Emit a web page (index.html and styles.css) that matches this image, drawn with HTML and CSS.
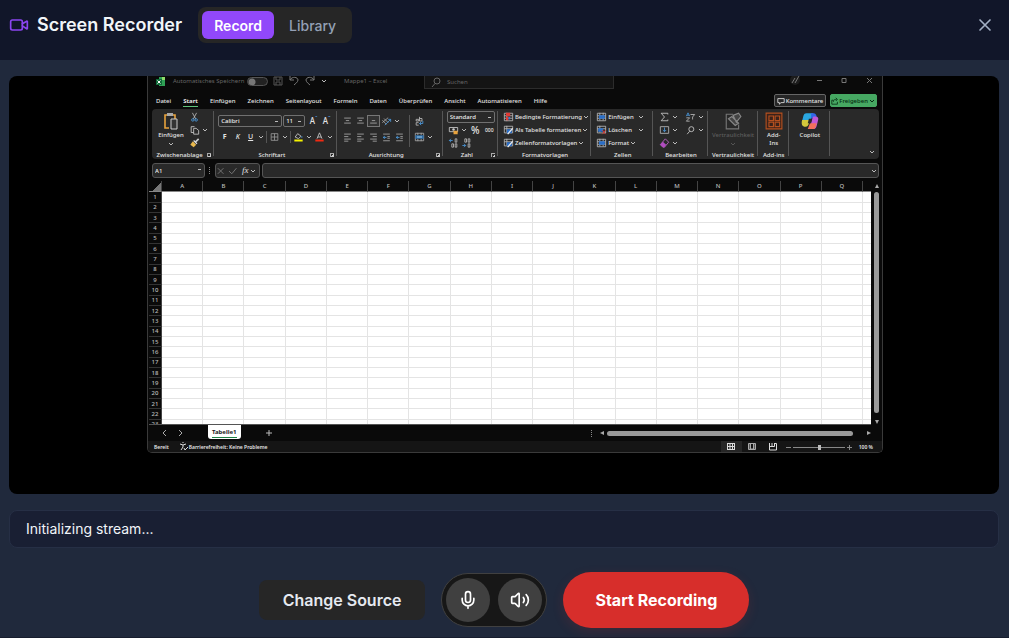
FILE: index.html
```html
<!DOCTYPE html>
<html lang="en">
<head>
<meta charset="utf-8">
<title>Screen Recorder</title>
<link rel="stylesheet" href="styles.css">
</head>
<body>
<svg class="sprite" aria-hidden="true">
  <symbol id="caret" viewBox="0 0 8 8"><path d="M2 3l2 2 2-2" fill="none" stroke="#bbb"/></symbol>
  <symbol id="excel" viewBox="0 0 9 9"><path d="M3 0h6v9H3z" fill="#2fa155"/><path d="M6 0h3v3H6z" fill="#8fdc6a"/><path d="M0 2h6v6H0z" fill="#0f6b38"/><path d="M1.5 3.5l3 3m0-3l-3 3" stroke="#fff"/></symbol>
  <symbol id="save" viewBox="0 0 12 12"><path d="M2 2h8v8H2zM4 2v3h4V2M4 10V7h4v3" fill="none" stroke="#555"/></symbol>
  <symbol id="undo" viewBox="0 0 12 12"><path d="M2 1v4h4M2 5c2-4 8-3 8 0 0 2-3 4-4 5" fill="none" stroke="#777"/></symbol>
  <symbol id="redo" viewBox="0 0 12 12"><path d="M10 1v4H6M10 5C8 1 2 2 2 5c0 2 3 4 4 5" fill="none" stroke="#777"/></symbol>
  <symbol id="find" viewBox="0 0 12 12"><circle cx="7" cy="5" r="3" fill="none" stroke="currentColor"/><path d="M5 7.5L2 11" stroke="currentColor"/></symbol>
  <symbol id="paste" viewBox="0 0 16 18"><path d="M6 16H2V3h10v4" fill="none" stroke="#e8a33d" stroke-width="1.6"/><path d="M4 1h6v3H4z" fill="#aaa"/><path d="M8 7h6v10H8z" fill="#333" stroke="#ccc"/></symbol>
  <symbol id="cut" viewBox="0 0 12 12"><path d="M3.500 1l4 7.500M8.500 1l-4 7.500" stroke="#bbb"/><circle cx="4" cy="9.500" r="1.500" fill="none" stroke="#4c9be0"/><circle cx="8" cy="9.500" r="1.500" fill="none" stroke="#4c9be0"/></symbol>
  <symbol id="copy" viewBox="0 0 12 12"><path d="M5 9H2V2h4M5 4h3l3 2.500V11H5z" fill="none" stroke="#ccc"/></symbol>
  <symbol id="brush" viewBox="0 0 12 12"><path d="M11 1L7 5" stroke="#ccc" stroke-width="2"/><path d="M4 4l4 4-3 3-4-3z" fill="#e8b84d"/><path d="M5 3l4 4" stroke="#ddd" stroke-width="1.500"/></symbol>
  <symbol id="borders" viewBox="0 0 12 12"><path d="M2 2h8v8H2zM6 2v8M2 6h8" fill="none" stroke="#999"/></symbol>
  <symbol id="fill" viewBox="0 0 12 12"><path d="M5 2l4 3-3 3-4-2z" fill="none" stroke="#ccc"/><path d="M10 5v2" stroke="#4c9be0"/><path d="M1 9h10v2.500H1z" fill="#f6f300"/></symbol>
  <symbol id="color" viewBox="0 0 12 12"><path d="M3 8l3-7 3 7M4 6h4" fill="none" stroke="#ccc"/><path d="M1 9h10v2.500H1z" fill="#f02a12"/></symbol>
  <symbol id="top" viewBox="0 0 12 12"><path d="M2 2.500h8M4 5.500h4M2 8.500h8" stroke="#aaa"/></symbol>
  <symbol id="bottom" viewBox="0 0 12 12"><path d="M4 5.500h4M2 8.500h8" stroke="#aaa"/></symbol>
  <symbol id="left" viewBox="0 0 12 12"><path d="M2 2.500h8M2 5.500h5M2 8.500h8M2 11h5" stroke="#aaa"/></symbol>
  <symbol id="right" viewBox="0 0 12 12"><path d="M2 2.500h8M5 5.500h5M2 8.500h8M5 11h5" stroke="#aaa"/></symbol>
  <symbol id="indent" viewBox="0 0 12 12"><path d="M2 2.500h8M7 5.500h3M7 7.500h3M2 10.500h8" stroke="#aaa"/><path d="M6 6.500H2M4 5L2 6.500 4 8" fill="none" stroke="#4c9be0"/></symbol>
  <symbol id="orient" viewBox="0 0 12 12"><path d="M1 5l5 5M3 3l5 5M1 8l7-6" stroke="#aaa"/><path d="M4 11l7-7M8 4h3v3" fill="none" stroke="#4c9be0"/></symbol>
  <symbol id="wrap" viewBox="0 0 12 12"><path d="M2 4h3v2H2zM6 1v5h3V3H6M5 8H2v3h3" fill="none" stroke="#bbb"/><path d="M10 6v3H6m2-2L6 9l2 2" fill="none" stroke="#4c9be0"/></symbol>
  <symbol id="merge" viewBox="0 0 12 12"><path d="M1 1.500h10v9H1zM4 1v3M8 1v3M4 8v3M8 8v3" fill="none" stroke="#aaa"/><path d="M1 4h10v4H1z" fill="#2b6ca8"/><path d="M3 6h6" stroke="#bde"/></symbol>
  <symbol id="money" viewBox="0 0 12 12"><path d="M1 3h10v5H1z" fill="none" stroke="#ccc"/><circle cx="6" cy="5.500" r="1.500" fill="#ccc"/><path d="M6 7h5v4H6z" fill="#e8a33d"/></symbol>
  <symbol id="decimal" viewBox="0 0 12 12"><path d="M5 3H1m2-2L1 3l2 2" fill="none" stroke="#4c9be0"/><path d="M8 1h2v4H8zM4 7h2v4H4zM8 7h2v4H8z" fill="none" stroke="#bbb"/></symbol>
  <symbol id="decimalLess" viewBox="0 0 12 12"><path d="M1 9h4M3 7l2 2-2 2" fill="none" stroke="#4c9be0"/><path d="M4 1h2v4H4zM8 1h2v4H8zM8 7h2v4H8z" fill="none" stroke="#bbb"/></symbol>
  <symbol id="cond" viewBox="0 0 12 12"><path d="M1 1.500h10v9H1zM1 4.500h10M1 7.500h10M4 1v10" fill="none" stroke="#bbb"/><path d="M3 1h5v4H3zM3 6h3v4H3z" fill="#e03b35"/><path d="M6 6h2v3H6z" fill="#3778c8"/></symbol>
  <symbol id="asTable" viewBox="0 0 12 12"><path d="M1 1.500h10v8H1zM1 4.500h10M4 1v8" fill="none" stroke="#bbb"/><path d="M4 5h6v5H4z" fill="#2b6fc8"/><path d="M11 4L5 11" stroke="#eee" stroke-width="1.500"/></symbol>
  <symbol id="cells" viewBox="0 0 12 12"><path d="M1 1.500h10v9H1zM1 4.500h10M1 7.500h10M4 1v9M8 1v9" fill="none" stroke="#bbb"/><path d="M3 4h7v4H3z" fill="#2b6fc8"/></symbol>
  <symbol id="cellsDel" viewBox="0 0 12 12"><path d="M1 1.500h10v8H1zM1 4.500h10M4 1v8" fill="none" stroke="#bbb"/><path d="M2 4h6v4H2z" fill="#2b6fc8"/><path d="M7 6l4 5m0-5l-4 5" stroke="#e03b35"/></symbol>
  <symbol id="sum" viewBox="0 0 12 12"><path d="M10 3V1.500H2L6 6l-4 4.500h8V9" fill="none" stroke="#ccc"/></symbol>
  <symbol id="sort" viewBox="0 0 12 12"><path d="M1 5l2-4 2 4M2 4h2" fill="none" stroke="#4c9be0"/><path d="M1 7h4l-4 4h4M6 3h5L8.500 6v3" fill="none" stroke="#bbb"/></symbol>
  <symbol id="down" viewBox="0 0 12 12"><path d="M1 2h10v8H1z" fill="none" stroke="#bbb"/><path d="M6 3v5M4 6l2 2 2-2" fill="none" stroke="#4c9be0"/></symbol>
  <symbol id="eraser" viewBox="0 0 12 12"><path d="M7 1l4 4-5 6H4L1 8z" fill="none" stroke="#c46bd0"/><path d="M4 4.500L8 8l-2 3H4L1 8z" fill="#b14cc0"/></symbol>
  <symbol id="privacy" viewBox="0 0 16 16"><path d="M8 2H2v13h11v-4" fill="none" stroke="#777"/><path d="M4 6l3-2 6 6-3 2zM8 3l5-2 2 3-4 5z" fill="#444" stroke="#888"/></symbol>
  <symbol id="addins" viewBox="0 0 16 16"><path d="M1 1h14v14H1zM3.500 3.500h4v4h-4zM9 3.500h4v4H9zM3.500 9h4v4h-4zM9 9h4v4H9z" fill="#3a221a" stroke="#b5501f"/></symbol>
  <symbol id="copilot" viewBox="0 0 16 16"><path d="M5 1h6L8 8H1l1-4c.5-2 1-3 3-3z" fill="#2aa6df"/><path d="M1 7h7l-1 3c-.5 2-1 3-3 3-3 0-4-2-3-6z" fill="#d3c63b"/><path d="M9 1h2c2 0 2.500 1 3 3.500L9 6z" fill="#3366e8"/><path d="M11 4h1c3 0 4 1 3 4l-1 4c-.5 2-1 3-3 3H7l3-9z" fill="#c159d6"/><path d="M8 10h6l-1 3c-.5 1.500-1 2-2 2H6z" fill="#f2705c"/><path d="M7 6h3L9 10H6z" fill="#292929"/></symbol>
  <symbol id="comment" viewBox="0 0 10 10"><path d="M1 2h8v5H5L3 9V7H1z" fill="none" stroke="#eee"/></symbol>
  <symbol id="share" viewBox="0 0 10 10"><path d="M3 4H1v5h7V6M3 6c0-3 2-3 4-3M6 1l2 2-2 2" fill="none" stroke="#062b12"/></symbol>
  <symbol id="normal" viewBox="0 0 8 8"><path d="M0 .5h8M0 3.500h8M0 6.500h8M.5 0v7M3 0v7M5.500 0v7M7.500 0v7" stroke="#ddd" fill="none"/></symbol>
  <symbol id="page" viewBox="0 0 8 8"><path d="M.5.5h7v6h-7zM2.500 1v5h3V1" stroke="#aaa" fill="#555"/></symbol>
  <symbol id="breaks" viewBox="0 0 8 8"><path d="M.5 0v7h7V.5h-2M.5 3.500h5V0M3 0v3" stroke="#ddd" fill="none"/></symbol>
  <symbol id="access" viewBox="0 0 9 9"><path d="M1 2l3 1 3-1M4 3v2L2 8M4 0v1" fill="none" stroke="#ddd"/><path d="M5 6l1 2 3-3" fill="none" stroke="#ddd"/></symbol>
</svg>

<div class="app">
  <header class="header">
    <svg class="logo" viewBox="0 0 24 24"><path d="m16 13 5.223 3.482a.5.5 0 0 0 .777-.416V7.870a.5.5 0 0 0-.752-.432L16 10.500"/><rect x="2" y="6" width="14" height="12" rx="2"/></svg>
    <h1 class="title">Screen Recorder</h1>
    <nav class="segments">
      <button class="segment active">Record</button>
      <button class="segment">Library</button>
    </nav>
    <button class="close" aria-label="Close"><svg viewBox="0 0 24 24"><path d="M18 6 6 18M6 6l12 12"/></svg></button>
  </header>

  <main class="main">
    <section class="preview">
      <div class="window">
        <div class="titlebar">
          <svg class="i9"><use href="#excel"/></svg>
          <span class="autosave">Automatisches Speichern</span>
          <span class="toggle"></span>
          <svg class="i12"><use href="#save"/></svg>
          <svg class="i12"><use href="#undo"/></svg>
          <svg class="i12"><use href="#redo"/></svg>
          <svg class="caret"><use href="#caret"/></svg>
          <span class="docname">Mappe1 – Excel</span>
          <span class="searchbox"><svg class="i12"><use href="#find"/></svg>Suchen</span>
          <svg class="winbuttons" viewBox="0 0 84 12"><circle cx="5" cy="5" r="5" fill="#1c1c1c"/><path d="M2 8l3-5m0 5l4-7" stroke="#777"/><path d="M27 5.500h5M52 3.500h4v4h-4zM77 3l5 5m0-5l-5 5" fill="none" stroke="#777"/></svg>
        </div>

        <div class="tabs">
          <button class="tab">Datei</button><button class="tab current">Start</button><button class="tab">Einfügen</button><button class="tab">Zeichnen</button><button class="tab">Seitenlayout</button><button class="tab">Formeln</button><button class="tab">Daten</button><button class="tab">Überprüfen</button><button class="tab">Ansicht</button><button class="tab">Automatisieren</button><button class="tab">Hilfe</button>
          <span class="tabactions">
            <button class="comments"><svg class="i8"><use href="#comment"/></svg>Kommentare</button>
            <button class="share"><svg class="i8"><use href="#share"/></svg>Freigeben<svg class="caret" viewBox="0 0 8 8"><path d="M2 3l2 2 2-2" fill="none" stroke="#062b12"/></svg></button>
          </span>
        </div>

        <div class="ribbon">
          <div class="group">
            <div class="tools split">
              <button class="big"><svg class="i18"><use href="#paste"/></svg>Einfügen<svg class="caret"><use href="#caret"/></svg></button>
              <div class="rows">
                <div class="row"><svg class="tool"><use href="#cut"/></svg></div>
                <div class="row"><svg class="tool"><use href="#copy"/></svg><svg class="caret"><use href="#caret"/></svg></div>
                <div class="row"><svg class="tool"><use href="#brush"/></svg></div>
              </div>
            </div>
            <div class="label">Zwischenablage<span class="corner"></span></div>
          </div>
          <div class="group">
            <div class="tools rows two">
              <div class="row"><select class="font" aria-label="Schriftart"><option>Calibri</option></select><select class="size" aria-label="Schriftgrad"><option>11</option></select><span class="glyph big-a">A<sup>ˆ</sup></span><span class="glyph big-a">A<sup>ˇ</sup></span></div>
              <div class="row"><b class="glyph">F</b><i class="glyph">K</i><u class="glyph">U</u><svg class="caret"><use href="#caret"/></svg><span class="bar"></span><svg class="tool"><use href="#borders"/></svg><svg class="caret"><use href="#caret"/></svg><span class="bar"></span><svg class="tool"><use href="#fill"/></svg><svg class="caret"><use href="#caret"/></svg><svg class="tool"><use href="#color"/></svg><svg class="caret"><use href="#caret"/></svg></div>
            </div>
            <div class="label">Schriftart<span class="corner"></span></div>
          </div>
          <div class="group">
            <div class="tools split">
              <div class="rows two align">
                <div class="row"><svg class="tool"><use href="#top"/></svg><svg class="tool"><use href="#top"/></svg><svg class="tool boxed"><use href="#bottom"/></svg><svg class="tool"><use href="#orient"/></svg><svg class="caret"><use href="#caret"/></svg></div>
                <div class="row"><svg class="tool"><use href="#left"/></svg><svg class="tool"><use href="#left"/></svg><svg class="tool"><use href="#right"/></svg><svg class="tool"><use href="#indent"/></svg><svg class="tool"><use href="#indent"/></svg></div>
              </div>
              <span class="bar tall"></span>
              <div class="rows two">
                <div class="row"><svg class="tool"><use href="#wrap"/></svg></div>
                <div class="row"><svg class="tool"><use href="#merge"/></svg><svg class="caret"><use href="#caret"/></svg></div>
              </div>
            </div>
            <div class="label">Ausrichtung<span class="corner"></span></div>
          </div>
          <div class="group">
            <div class="tools rows">
              <div class="row"><select class="format" aria-label="Zahlenformat"><option>Standard</option></select></div>
              <div class="row"><svg class="tool"><use href="#money"/></svg><svg class="caret"><use href="#caret"/></svg><span class="glyph percent">%</span><span class="glyph zeros">000</span></div>
              <div class="row"><svg class="tool"><use href="#decimal"/></svg><svg class="tool"><use href="#decimalLess"/></svg></div>
            </div>
            <div class="label">Zahl<span class="corner"></span></div>
          </div>
          <div class="group">
            <div class="tools rows">
              <button class="row"><svg class="tool"><use href="#cond"/></svg>Bedingte Formatierung<svg class="caret"><use href="#caret"/></svg></button>
              <button class="row"><svg class="tool"><use href="#asTable"/></svg>Als Tabelle formatieren<svg class="caret"><use href="#caret"/></svg></button>
              <button class="row"><svg class="tool"><use href="#asTable"/></svg>Zellenformatvorlagen<svg class="caret"><use href="#caret"/></svg></button>
            </div>
            <div class="label">Formatvorlagen</div>
          </div>
          <div class="group">
            <div class="tools rows">
              <button class="row"><svg class="tool"><use href="#cells"/></svg><span class="cmd">Einfügen</span><svg class="caret"><use href="#caret"/></svg></button>
              <button class="row"><svg class="tool"><use href="#cellsDel"/></svg><span class="cmd">Löschen</span><svg class="caret"><use href="#caret"/></svg></button>
              <button class="row"><svg class="tool"><use href="#cells"/></svg>Format<svg class="caret"><use href="#caret"/></svg></button>
            </div>
            <div class="label">Zellen</div>
          </div>
          <div class="group">
            <div class="tools rows edit">
              <div class="row"><svg class="tool"><use href="#sum"/></svg><svg class="caret"><use href="#caret"/></svg><svg class="tool second"><use href="#sort"/></svg><svg class="caret"><use href="#caret"/></svg></div>
              <div class="row"><svg class="tool"><use href="#down"/></svg><svg class="caret"><use href="#caret"/></svg><svg class="tool second"><use href="#find"/></svg><svg class="caret"><use href="#caret"/></svg></div>
              <div class="row"><svg class="tool"><use href="#eraser"/></svg><svg class="caret"><use href="#caret"/></svg></div>
            </div>
            <div class="label">Bearbeiten</div>
          </div>
          <div class="group">
            <button class="tools big dim"><svg class="i18"><use href="#privacy"/></svg>Vertraulichkeit<svg class="caret"><use href="#caret"/></svg></button>
            <div class="label">Vertraulichkeit</div>
          </div>
          <div class="group">
            <button class="tools big"><svg class="i18"><use href="#addins"/></svg>Add-<br>Ins</button>
            <div class="label">Add-ins</div>
          </div>
          <div class="group">
            <button class="tools big"><svg class="i18"><use href="#copilot"/></svg>Copilot</button>
          </div>
          <div class="group last"><svg class="caret"><use href="#caret"/></svg></div>
        </div>

        <div class="formulabar">
          <select class="namebox" aria-label="Namenfeld"><option>A1</option></select>
          <span class="grip"></span>
          <span class="fx"><svg viewBox="0 0 28 10"><path d="M2 2l6 6m0-6L2 8M14 5l3 3 5-6" fill="none" stroke="#777"/></svg><i>fx</i><svg class="caret"><use href="#caret"/></svg></span>
          <span class="formula"><svg class="caret"><use href="#caret"/></svg></span>
        </div>

        <div class="sheetarea">
          <div class="sheetclip"><table class="sheet" id="sheet"></table></div>
          <div class="vscroll"><span class="arrow up"></span><span class="thumb"></span><span class="arrow dn"></span></div>
        </div>

        <div class="sheettabs">
          <svg class="pager" viewBox="0 0 32 10"><path d="M9 2L6 5l3 3M22 2l3 3-3 3" fill="none" stroke="#aaa"/></svg>
          <button class="sheettab"><span>Tabelle1</span></button>
          <svg class="plus" viewBox="0 0 8 8"><path d="M4 1v6M1 4h6" stroke="#bbb"/></svg>
          <span class="hscroll"><span class="grip"></span><span class="arrow lf"></span><span class="thumb"></span><span class="arrow rt"></span></span>
        </div>

        <div class="statusbar">
          <span>Bereit</span>
          <svg class="i9"><use href="#access"/></svg>
          <span>Barrierefreiheit: Keine Probleme</span>
          <span class="views">
            <span class="view on"><svg class="i8"><use href="#normal"/></svg></span><span class="view"><svg class="i8"><use href="#page"/></svg></span><span class="view"><svg class="i8"><use href="#breaks"/></svg></span>
            <svg class="zoom" viewBox="0 0 68 10"><path d="M1 5.500h5M8 5.500h52M62 5.500h5M64.500 3v5" stroke="#888"/><path d="M33 3h3v5h-3z" fill="#bbb"/></svg>
            <span>100 %</span>
          </span>
        </div>
      </div>
    </section>

    <p class="status">Initializing stream...</p>

    <div class="controls">
      <button class="source">Change Source</button>
      <div class="audio">
        <button class="round" aria-label="Microphone"><svg viewBox="0 0 24 24"><path d="M12 2a3 3 0 0 0-3 3v7a3 3 0 0 0 6 0V5a3 3 0 0 0-3-3Z"/><path d="M19 10v2a7 7 0 0 1-14 0v-2M12 19v3"/></svg></button>
        <button class="round" aria-label="System audio"><svg viewBox="0 0 24 24"><path d="M11 4.700a.7.7 0 0 0-1.200-.5L6.400 7.600A1.400 1.400 0 0 1 5.400 8H3a1 1 0 0 0-1 1v6a1 1 0 0 0 1 1h2.400a1.400 1.400 0 0 1 1 .4l3.400 3.400a.7.7 0 0 0 1.200-.5zM16 9a5 5 0 0 1 0 6M19.400 18.400a9 9 0 0 0 0-12.800"/></svg></button>
      </div>
      <button class="record">Start Recording</button>
    </div>
  </main>
</div>
<script src="sheet.js"></script>
</body>
</html>
```
FILE: styles.css
```css
* { box-sizing: border-box; }
body { margin: 0; background: #20293c; color: #f1f5f9; font-family: Inter, sans-serif; }
button { font: inherit; color: inherit; border: 0; padding: 0; background: none; cursor: pointer; }
svg { display: block; flex: none; }
.sprite { position: absolute; width: 0; height: 0; }

.app { min-height: 100vh; display: flex; flex-direction: column; border-bottom: 1px solid #171d2e; }
.header { height: 60px; padding: 0 14px 10px 9px; background: #111629; display: flex; align-items: center; }
.logo { width: 20px; height: 20px; fill: none; stroke: #8b45f0; stroke-width: 2; stroke-linecap: round; stroke-linejoin: round; }
.title { margin: 0 16px 0 8px; font-size: 18px; line-height: 28px; font-weight: 600; }
.segments { display: flex; gap: 3px; padding: 4px; border-radius: 8px; background: #262626; }
.segment { height: 28px; padding: 0 12px; border-radius: 6px; font-size: 14px; font-weight: 500; color: #94a0b5; }
.segment.active { background: #9148fa; color: #fff; font-weight: 600; }
.close { margin-left: auto; }
.close svg { width: 20px; height: 20px; fill: none; stroke: #a3b0c4; stroke-width: 2; stroke-linecap: round; }

.main { flex: 1; padding: 16px 10px 9px 9px; display: flex; flex-direction: column; gap: 16px; }
.preview { flex: 1; border-radius: 8px; overflow: hidden; background: #000; display: grid; grid-template-columns: 138fr 736fr 116fr; align-items: start; }
.status { margin: 0; height: 38px; padding: 0 16px; border: 1px solid #262f45; border-radius: 8px; background: #191f33; font-size: 14px; line-height: 36px; font-weight: 400; color: #f1f5f9; }
.controls { margin-top: 8px; display: flex; justify-content: center; align-items: center; gap: 16px; }
.source { height: 40px; padding: 0 24px; border-radius: 8px; background: #262626; font-size: 16px; font-weight: 600; color: #e5e9f0; }
.audio { display: flex; gap: 8px; padding: 4px; border: 1px solid #404040; border-radius: 27px; background: #171717; }
.round { width: 44px; height: 44px; border-radius: 50%; background: #404040; display: grid; place-items: center; }
.round svg { width: 20px; height: 20px; fill: none; stroke: #fff; stroke-width: 2; stroke-linecap: round; stroke-linejoin: round; }
.record { height: 56px; padding: 0 32px; border-radius: 28px; background: #d72e2b; color: #fff; font-size: 16px; font-weight: 700; box-shadow: 0 4px 12px rgba(215, 46, 43, 0.15); }

/* Captured window */
.window { grid-column: 2; min-width: 0; height: 377px; padding: 0 3px 0 1px; display: flex; flex-direction: column; background: #0a0a0a; border: 1px solid #3a3a3a; border-top: 0; border-radius: 0 0 5px 5px; color: #e4e4e4; font: 500 6px/8px "Noto Sans", sans-serif; overflow: hidden; }
.window select { appearance: none; height: 12px; padding: 0 2px; border: 1px solid #707070; border-radius: 2px; background: #292929 linear-gradient(#bbb, #bbb) no-repeat calc(100% - 3px) 5px / 3px 1px; color: #eee; font: inherit; }
.caret { width: 8px; height: 8px; }
.i8 { width: 8px; height: 8px; }
.i9 { width: 9px; height: 9px; }
.i12 { width: 12px; height: 12px; }
.i18 { width: 18px; height: 18px; }

.titlebar { height: 13px; padding: 0 5px 3px 7px; display: flex; align-items: center; gap: 4px; color: #666; font-weight: 400; }
.autosave { width: 70px; margin-left: 4px; white-space: nowrap; }
.toggle { width: 21px; height: 9px; border: 1px solid #555; border-radius: 5px; background: radial-gradient(circle at 4px 4px, #777 3px, #222 4px); }
.searchbox { width: 190px; height: 13px; margin: 0 auto 0 32px; padding-left: 5px; display: flex; align-items: center; gap: 5px; align-self: flex-start; border: 1px solid #2c2c2c; border-top: 0; background: #141414; }
.docname { width: 44px; margin-left: 12px; white-space: nowrap; }
.winbuttons { width: 84px; height: 12px; }

.tabs { height: 20px; padding: 5px 2px 0 7px; display: flex; align-items: flex-start; gap: 12px; }
.tab { height: 13px; padding: 1px 0 0; border-bottom: 1px solid transparent; white-space: nowrap; }
.tab.current { font-weight: 700; border-color: #5fc27a; }
.tabactions { margin-left: auto; display: flex; gap: 4px; }
.comments, .share { height: 13px; padding: 0 2px; display: flex; align-items: center; gap: 1px; border: 1px solid #666; border-radius: 2px; background: #262626; }
.share { padding: 0; gap: 0; border-color: #46a862; background: #46a862; color: #062b12; }

.ribbon { height: 51px; margin-left: 3px; display: grid; grid-template-columns: 62fr 122fr 106fr 55fr 93fr 62fr 54fr 50fr 31fr 41fr 49fr; border-radius: 4px; background: #292929; }
.group { min-width: 0; padding: 2px 3px 0 4px; display: flex; flex-direction: column; white-space: nowrap; background: linear-gradient(#555, #555) no-repeat 100% 2px / 1px 45px; }
.tools { height: 40px; }
.label { position: relative; padding-right: 8px; text-align: center; }
.group:nth-child(n + 5) .label { padding: 0; margin: 0 -4px; }
.corner { position: absolute; right: 0; top: 2px; width: 4px; height: 4px; border: 1px solid #aaa; border-width: 1px 0 0 1px; background: linear-gradient(135deg, transparent 50%, #ccc 50%); }
.split { display: flex; gap: 2px; }
.rows { display: grid; grid-template-rows: repeat(3, 13px); align-content: start; }
.rows.two { grid-template-rows: 15px 16px; padding-top: 3px; }
.row { display: flex; align-items: center; }
.tool { width: 13px; height: 12px; padding: 1px; }
.boxed { padding: 0; border: 1px solid #777; background: #333; }
.big { display: flex; flex-direction: column; align-items: center; gap: 1px; padding-top: 1px; }
.split .big { width: 30px; }
.group > .big { margin: 0 -4px; }
.dim { color: #5c5c5c; }
.dim .caret { opacity: 0.3; }
.glyph { width: 13px; text-align: center; font-size: 7px; }
.big-a { font-size: 8px; }
.big-a sup { font-size: 6px; line-height: 0; color: #4c9be0; }
.percent { width: 15px; font-size: 10px; }
.zeros { font-size: 5px; }
.bar { width: 1px; height: 12px; margin: 0 1px; background: #555; }
.bar.tall { height: 32px; margin: 4px 1px; }
.align { width: 65px; }
.font { width: 64px; margin-right: 1px; }
.size { width: 22px; margin-right: 2px; }
.window .format { width: 48px; height: 12px; }
.cmd { width: 29px; text-align: left; }
.edit { padding-left: 1px; }
.second { margin-left: 5px; color: #ccc; }
.last { background: none; align-items: flex-end; justify-content: flex-end; padding-bottom: 3px; }

.formulabar { height: 15px; margin: 4px 0 3px 3px; display: flex; gap: 3px; align-items: stretch; }
.window .namebox { width: 53px; height: 15px; border-radius: 3px; border-color: #555; }
.grip { width: 2px; height: 7px; margin: 4px 1px; border-left: 1px dotted #888; }
.fx, .formula { display: flex; align-items: center; border: 1px solid #555; border-radius: 3px; background: #292929; }
.fx { width: 45px; }
.fx i { font: italic 9px/9px "Liberation Serif", serif; }
.fx svg:first-child { width: 26px; height: 10px; }
.formula { flex: 1; margin-left: -1px; justify-content: flex-end; }

.sheetarea { height: 244px; display: flex; }
.sheetclip { flex: 1; overflow: hidden; background: #fff; border-bottom: 1px solid #555; }
.sheet { width: 100%; height: 249px; table-layout: fixed; border-collapse: separate; border-spacing: 0; }
.sheet th { padding: 0; background: #0a0a0a; color: #bbb; font-weight: 500; font-size: 6px; line-height: 6px; border-right: 1px solid #444; overflow: hidden; }
.sheet thead th { height: 11px; border-bottom: 1px solid #888; }
.sheet tbody th { border-bottom: 1px solid #333; }
.sheet td { padding: 0; border-right: 1px solid #e4e4e4; border-bottom: 1px solid #e4e4e4; }
.sheet .rowhead { width: 13px; }
.sheet .edge { width: 8px; border-right: 0; }
.sheet .selectall { background: linear-gradient(135deg, #0a0a0a 60%, #777 60%); }
.vscroll { width: 8px; padding: 3px 0 1px 3px; display: flex; flex-direction: column; align-items: center; gap: 4px; }
.thumb { border-radius: 3px; background: #999; }
.vscroll .thumb { width: 5px; height: 223px; }
.arrow { width: 0; height: 0; border: 2px solid transparent; }
.up { border-top: 0; border-bottom: 4px solid #aaa; }
.dn { border-bottom: 0; border-top: 4px solid #aaa; margin-top: 3px; }
.lf { border-left: 0; border-right: 4px solid #aaa; }
.rt { border-right: 0; border-left: 4px solid #aaa; }

.sheettabs { height: 16px; display: flex; align-items: center; padding: 0 8px; }
.pager { width: 32px; height: 10px; }
.sheettab { align-self: flex-start; height: 14px; margin: 0 24px 0 19px; padding: 0 4px; border-radius: 0 0 3px 3px; background: #fff; color: #222; font-weight: 700; }
.sheettab span { display: block; height: 11px; padding-top: 1px; border-bottom: 1px solid #1d8044; font-size: 6px; }
.plus { width: 8px; height: 8px; }
.hscroll { margin-left: auto; display: flex; align-items: center; gap: 3px; }
.hscroll .thumb { width: 246px; height: 5px; }
.hscroll .grip { margin: 0 4px; }
.hscroll .rt { margin-left: 11px; }

.statusbar { flex: 1; margin: 0 -3px 0 -1px; padding: 0 9px 0 6px; display: flex; align-items: center; background: #151515; font-size: 5px; font-weight: 600; }
.statusbar > .i9 { margin: 0 1px 0 10px; }
.views { margin-left: auto; display: flex; align-items: center; }
.view { width: 21px; height: 11px; display: grid; place-items: center; }
.view.on { background: #262626; }
.zoom { width: 68px; height: 10px; margin: 0 6px 0 1px; }
```
FILE: sheet.js
```js
const letters = 'ABCDEFGHIJKLMNOPQ'.split('');
const rowCount = 23;
const head = '<thead><tr><th class="rowhead selectall"></th>' +
  letters.map(l => `<th>${l}</th>`).join('') + '<th class="edge"></th></tr></thead>';
let body = '<tbody>';
for (let r = 1; r <= rowCount; r++) {
  body += `<tr><th>${r}</th>` +
    letters.map(() => '<td></td>').join('') + '<td class="edge"></td></tr>';
}
document.getElementById('sheet').innerHTML = head + body + '</tbody>';
```
